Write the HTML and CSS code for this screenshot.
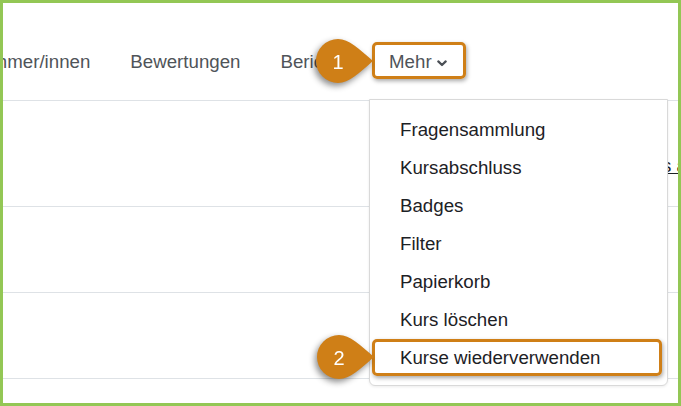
FILE: index.html
```html
<!DOCTYPE html>
<html lang="de">
<head>
<meta charset="utf-8">
<title>Mehr</title>
<link rel="stylesheet" href="styles.css">
</head>
<body>
<div class="frame">
  <nav class="nav">
    <span class="nav-item first">Teilnehmer/innen</span>
    <span class="nav-item">Bewertungen</span>
    <span class="nav-item">Berichte</span>
    <span class="nav-item more">Mehr
      <svg class="chev" width="10" height="7" viewBox="0 0 10 7"><path d="M1.3 1.4 L5 5 L8.7 1.4" fill="none" stroke="#4a4f55" stroke-width="2.2" stroke-linecap="round" stroke-linejoin="round"/></svg>
    </span>
  </nav>
  <div class="row row-first"><a class="hidden-link">Kurs abschließen</a></div>
  <div class="row"></div>
  <div class="row"></div>

  <ul class="dropdown">
    <li>Fragensammlung</li>
    <li>Kursabschluss</li>
    <li>Badges</li>
    <li>Filter</li>
    <li>Papierkorb</li>
    <li>Kurs löschen</li>
    <li>Kurse wiederverwenden</li>
  </ul>

  <div class="hl hl-mehr"></div>
  <div class="hl hl-reuse"></div>

  <svg class="callout c1" width="64" height="54" viewBox="-3 -3 64 54">
    <path d="M22 0 C33 0 43 10 57 22 C43 34 33 44 22 44 A22 22 0 0 1 22 0 Z" fill="#cf7f17"/>
    <text x="22" y="29.5" text-anchor="middle">1</text>
  </svg>
  <svg class="callout c2" width="64" height="54" viewBox="-3 -3 64 54">
    <path d="M22 0 C33 0 43 10 57 22 C43 34 33 44 22 44 A22 22 0 0 1 22 0 Z" fill="#cf7f17"/>
    <text x="22" y="29.5" text-anchor="middle">2</text>
  </svg>
</div>
</body>
</html>
```

FILE: styles.css
```css
* { box-sizing: border-box; }
html, body { margin: 0; padding: 0; background: #fff; }
body { font-family: "Liberation Sans", Arial, sans-serif; }

.frame {
  position: relative;
  width: 681px;
  height: 406px;
  border: 3px solid #93c755;
  overflow: hidden;
  background: #fff;
}

.nav {
  display: flex;
  height: 98px;
  padding-top: 40px;
  border-bottom: 1px solid #dee2e6;
  white-space: nowrap;
}
.nav-item {
  display: flex;
  align-items: center;
  height: 38px;
  padding: 0 20px;
  font-size: 18.7px;
  color: #4f5459;
}
.nav-item.first { margin-left: -75px; }
.nav-item.more { gap: 5px; }
.chev { margin-top: 2px; }

.row {
  height: 86px;
  border-bottom: 1px solid #dee2e6;
}
.row-first {
  height: 106px;
  display: flex;
  align-items: center;
  padding-top: 24px;
  white-space: nowrap;
}
.hidden-link {
  margin-left: 630px;
  font-size: 18.7px;
  color: #1d2125;
  text-decoration: underline;
}

.dropdown {
  position: absolute;
  left: 366px;
  top: 96px;
  width: 299px;
  height: 287px;
  margin: 0;
  padding: 11px 0 10px 30px;
  list-style: none;
  background: #fff;
  border: 1px solid #d9d9d9;
  border-radius: 0 0 6px 6px;
  box-shadow: 0 1px 3px rgba(0,0,0,0.08);
}
.dropdown li {
  height: 38px;
  line-height: 38px;
  font-size: 18.7px;
  color: #1d2125;
}

.hl {
  position: absolute;
  border: 3px solid #cf7f17;
  border-radius: 5px;
  box-shadow: 1px 2px 4px rgba(0,0,0,0.35);
}
.hl-mehr { left: 369px; top: 39px; width: 94px; height: 37px; }
.hl-reuse { left: 369px; top: 336px; width: 290px; height: 37px; }

.callout {
  position: absolute;
  overflow: visible;
  filter: drop-shadow(-2px 3px 3px rgba(0,0,0,0.45));
}
.callout text {
  font-family: "Liberation Sans", Arial, sans-serif;
  font-size: 20px;
  fill: #fff;
}
.c1 { left: 310px; top: 33px; }
.c2 { left: 311px; top: 329px; }
```
